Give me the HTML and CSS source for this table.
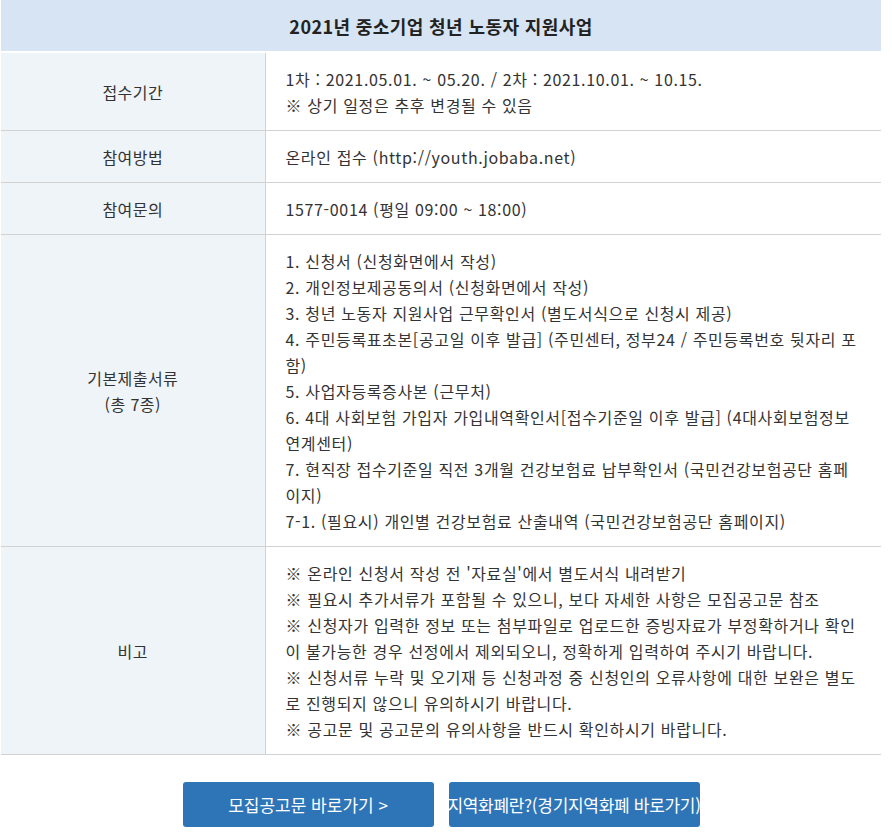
FILE: index.html
```html
<!DOCTYPE html>
<html lang="ko">
  <head>
    <meta charset="UTF-8" />
    <meta name="viewport" content="width=device-width, initial-scale=1.0" />
    <title>2021년 중소기업 청년 노동자 지원사업</title>
    <link rel="stylesheet" href="styles.css">
  </head>
  <body>
    <div class="board">
      <table class="info-table">
        <thead>
          <tr>
            <th colspan="2" class="title">2021년 중소기업 청년 노동자 지원사업</th>
          </tr>
        </thead>
        <tbody>
          <tr>
            <th>접수기간</th>
            <td>
              1차 : 2021.05.01. ~ 05.20. / 2차 : 2021.10.01. ~ 10.15.<br />
              ※ 상기 일정은 추후 변경될 수 있음
            </td>
          </tr>
          <tr>
            <th>참여방법</th>
            <td>온라인 접수 (http://youth.jobaba.net)</td>
          </tr>
          <tr>
            <th>참여문의</th>
            <td>1577-0014 (평일 09:00 ~ 18:00)</td>
          </tr>
          <tr>
            <th>기본제출서류<br />(총 7종)</th>
            <td>
              <p>1. 신청서 (신청화면에서 작성)</p>
              <p>2. 개인정보제공동의서 (신청화면에서 작성)</p>
              <p>3. 청년 노동자 지원사업 근무확인서 (별도서식으로 신청시 제공)</p>
              <p>4. 주민등록표초본[공고일 이후 발급] (주민센터, 정부24 / 주민등록번호 뒷자리 포함)</p>
              <p>5. 사업자등록증사본 (근무처)</p>
              <p>6. 4대 사회보험 가입자 가입내역확인서[접수기준일 이후 발급] (4대사회보험정보연계센터)</p>
              <p>7. 현직장 접수기준일 직전 3개월 건강보험료 납부확인서 (국민건강보험공단 홈페이지)</p>
              <p>7-1. (필요시) 개인별 건강보험료 산출내역 (국민건강보험공단 홈페이지)</p>
            </td>
          </tr>
          <tr>
            <th>비고</th>
            <td>
              <p>※ 온라인 신청서 작성 전 '자료실'에서 별도서식 내려받기</p>
              <p>※ 필요시 추가서류가 포함될 수 있으니, 보다 자세한 사항은 모집공고문 참조</p>
              <p>※ 신청자가 입력한 정보 또는 첨부파일로 업로드한 증빙자료가 부정확하거나 확인이 불가능한 경우 선정에서 제외되오니, 정확하게 입력하여 주시기 바랍니다.</p>
              <p>※ 신청서류 누락 및 오기재 등 신청과정 중 신청인의 오류사항에 대한 보완은 별도로 진행되지 않으니 유의하시기 바랍니다.</p>
              <p>※ 공고문 및 공고문의 유의사항을 반드시 확인하시기 바랍니다.</p>
            </td>
          </tr>
        </tbody>
      </table>

      <!-- 바로가기 버튼 -->
      <div class="btn-group">
        <a href="#" class="btn">모집공고문 바로가기 &gt;</a>
        <a href="#" class="btn btn-tight">지역화폐란?(경기지역화폐 바로가기)</a>
      </div>
    </div>
  </body>
</html>
```

FILE: styles.css
```css
/* ======= 변수 ======= */
:root {
  --font-family: "Noto Sans CJK KR", "Noto Sans", sans-serif;
  --color-text: #333;
  --color-head-bg: #d6e4f3;
  --color-label-bg: #eff4f9;
  --color-border: #d2d2d2;
  --color-primary: #2e75b8;
}

* {
  box-sizing: border-box;
  margin: 0;
  padding: 0;
}

body {
  font-family: var(--font-family);
  color: var(--color-text);
  background: #fff;
}

.board {
  width: 880px;
  margin-left: 1px;
}

/* ======= 표 ======= */
.info-table {
  width: 100%;
  border-collapse: collapse;
  font-size: 16px;
  line-height: 26px;
  letter-spacing: 0.65px;
}

.info-table .title {
  height: 52px;
  background-color: var(--color-head-bg);
  font-size: 18px;
  font-weight: bold;
  color: #222;
  text-align: center;
  letter-spacing: 0.4px;
  border-bottom: 2px solid #fff;
}

.info-table tbody th {
  width: 264px;
  background-color: var(--color-label-bg);
  font-weight: normal;
  text-align: center;
  vertical-align: middle;
  letter-spacing: 0.45px;
  border-right: 1px solid var(--color-border);
  border-bottom: 1px solid var(--color-border);
}

.info-table tbody td {
  padding: 13px 20px 12px;
  border-bottom: 1px solid var(--color-border);
}

/* ======= 버튼 ======= */
.btn-group {
  display: flex;
  justify-content: center;
  gap: 15px;
  margin-top: 27px;
}

.btn {
  display: flex;
  align-items: center;
  justify-content: center;
  width: 251px;
  height: 45px;
  background-color: var(--color-primary);
  color: #fff;
  font-size: 17px;
  text-decoration: none;
  border-radius: 3px;
  white-space: nowrap;
}

.btn-tight {
  letter-spacing: -0.3px;
}
```
